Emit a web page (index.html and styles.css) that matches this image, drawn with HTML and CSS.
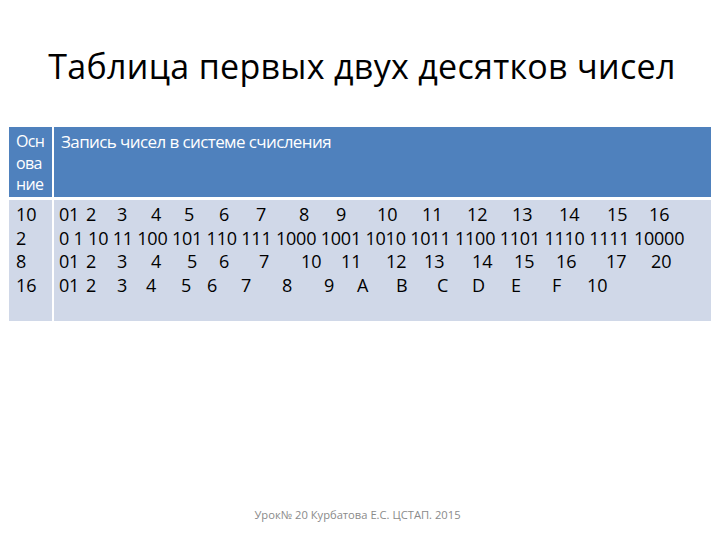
FILE: index.html
```html
<!DOCTYPE html>
<html lang="ru">
<head>
<meta charset="utf-8">
<title>Таблица первых двух десятков чисел</title>
<link rel="stylesheet" href="styles.css">
</head>
<body>
<div class="slide">
  <h1 class="title">Таблица первых двух десятков чисел</h1>
  <div class="table">
    <div class="cell head first">Осн<br>ова<br>ние</div>
    <div class="cell head second">Запись чисел в системе счисления</div>
    <div class="cell body first">
      <div class="line">10</div>
      <div class="line">2</div>
      <div class="line">8</div>
      <div class="line">16</div>
    </div>
    <div class="cell body second">
      <div class="line row r10"><span>0</span><span>1</span><span>2</span><span>3</span><span>4</span><span>5</span><span>6</span><span>7</span><span>8</span><span>9</span><span>10</span><span>11</span><span>12</span><span>13</span><span>14</span><span>15</span><span>16</span></div>
      <div class="line bin">0 1 10 11 100 101 110 111 1000 1001 1010 1011 1100 1101 1110 1111 10000</div>
      <div class="line row r8"><span>0</span><span>1</span><span>2</span><span>3</span><span>4</span><span>5</span><span>6</span><span>7</span><span>10</span><span>11</span><span>12</span><span>13</span><span>14</span><span>15</span><span>16</span><span>17</span><span>20</span></div>
      <div class="line row r16"><span>0</span><span>1</span><span>2</span><span>3</span><span>4</span><span>5</span><span>6</span><span>7</span><span>8</span><span>9</span><span>A</span><span>B</span><span>C</span><span>D</span><span>E</span><span>F</span><span>10</span></div>
    </div>
  </div>
  <div class="footer">Урок№ 20 Курбатова Е.С. ЦСТАП. 2015</div>
</div>
</body>
</html>
```
FILE: styles.css
```css
html, body {
  margin: 0;
  padding: 0;
  background: #ffffff;
}

.slide {
  width: 720px;
  height: 540px;
  box-sizing: border-box;
  padding-top: 46px;
  display: flex;
  flex-direction: column;
  font-family: "Open Sans", "Noto Sans", sans-serif;
  color: #000000;
}

.title {
  margin: 0 0 41px 0;
  height: 40px;
  font-size: 34px;
  line-height: 40px;
  font-weight: 400;
  text-align: center;
  letter-spacing: 0.3px;
  padding-left: 4px;
}

.table {
  margin-left: 9px;
  width: 702px;
  display: grid;
  grid-template-columns: 43px 1fr;
  grid-template-rows: 70px 121px;
  column-gap: 2px;
  row-gap: 3px;
  font-size: 18px;
}

.cell {
  box-sizing: border-box;
}

.head {
  background: #4f81bd;
  color: #ffffff;
  line-height: 21.5px;
  padding-top: 4px;
  font-size: 17px;
  letter-spacing: -0.6px;
}

.head.first {
  font-size: 16px;
  letter-spacing: -0.7px;
  padding-left: 7px;
}

.body {
  background: #d0d8e8;
  line-height: 23.5px;
  padding-top: 3px;
}

.first {
  padding-left: 7px;
}

.second {
  padding-left: 5px;
}

.head.second {
  padding-left: 7px;
}

.line {
  height: 23.5px;
  white-space: nowrap;
}

.row {
  display: grid;
}

.r10 {
  grid-template-columns: 10px 17px 31px 34px 33px 35px 37px 43px 37px 41px 45px 45px 45px 47px 48px 42px auto;
}

.r8 {
  grid-template-columns: 10px 17px 31px 34px 36px 32px 40px 42px 40px 45px 38px 48px 42px 42px 50px 45px auto;
}

.r16 {
  grid-template-columns: 10px 17px 31px 29px 35px 26px 34px 41px 42px 33px 39px 41px 35px 39px 41px 35px auto;
}

.bin {
  letter-spacing: -0.22px;
  word-spacing: 0px;
}

.footer {
  margin-top: auto;
  margin-bottom: 18px;
  text-align: center;
  font-size: 11.2px;
  color: #8a8a8a;
  padding-right: 5px;
}
```
